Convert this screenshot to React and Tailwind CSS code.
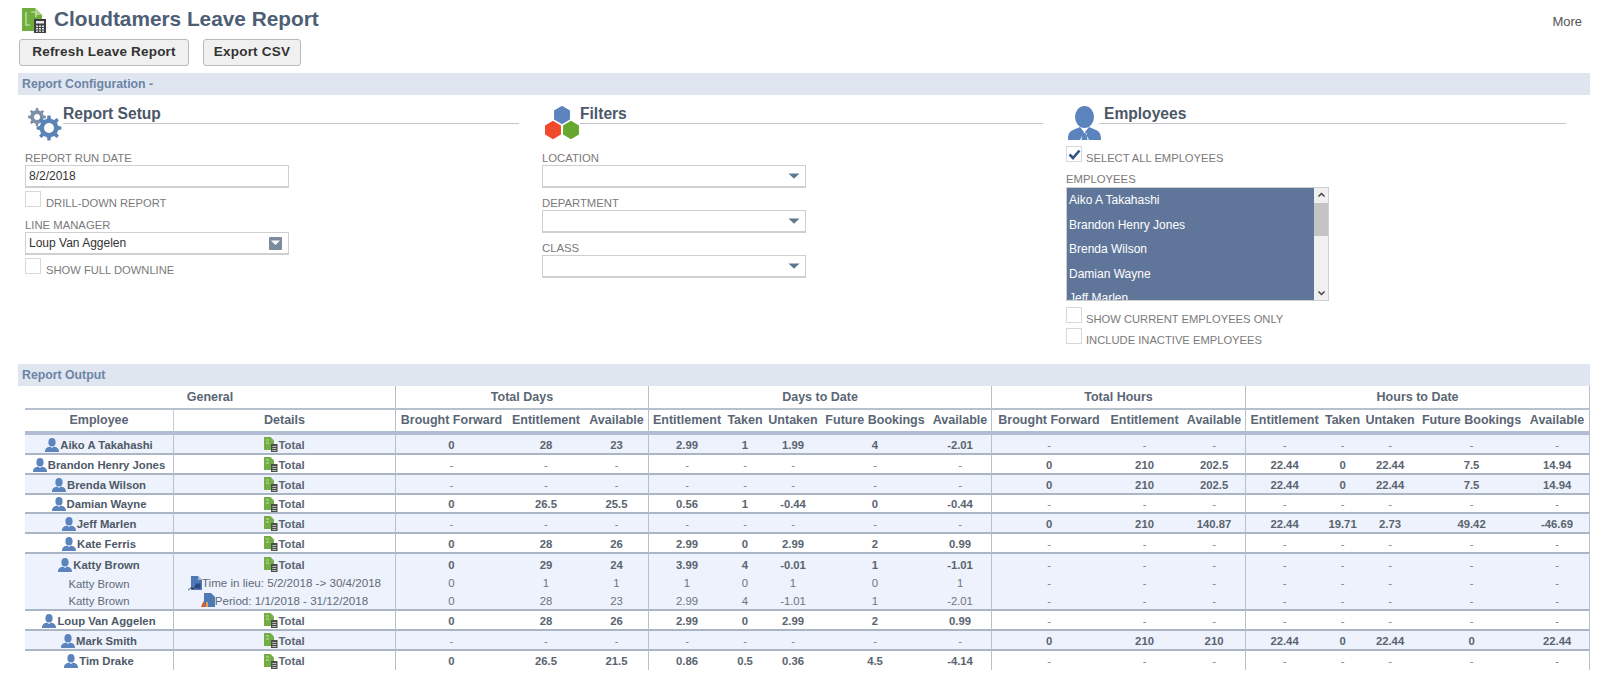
import React from "react";

const GEAR = (cx, cy, rO, rI, n) => {
  let d = "";
  const step = (Math.PI * 2) / n;
  for (let i = 0; i < n; i++) {
    const a = i * step;
    const pts = [
      [a - step * 0.26, rI],
      [a - step * 0.16, rO],
      [a + step * 0.16, rO],
      [a + step * 0.26, rI],
    ];
    pts.forEach(([t, r], j) => {
      d += `${i === 0 && j === 0 ? "M" : "L"}${(cx + r * Math.cos(t)).toFixed(2)} ${(cy + r * Math.sin(t)).toFixed(2)} `;
    });
  }
  return d + "Z";
};

const hex = (cx, cy, r) => {
  let d = "";
  for (let i = 0; i < 6; i++) {
    const t = Math.PI / 6 + (i * Math.PI) / 3;
    d += `${i ? "L" : "M"}${(cx + r * Math.cos(t)).toFixed(2)} ${(cy + r * Math.sin(t)).toFixed(2)} `;
  }
  return d + "Z";
};

function TitleIcon() {
  return (
    <svg width="25" height="26" viewBox="0 0 25 26" className="shrink-0">
      <path d="M0 1h13l7 7v16H0z" fill="#6fae3c" />
      <path d="M13 1l7 7h-7z" fill="#a5d07c" />
      <path d="M4 5v13h4M9 5h5v5" fill="none" stroke="#cfe6b4" strokeWidth="1.2" />
      <rect x="12" y="12" width="12" height="14" fill="#3f3f3f" />
      <rect x="14" y="14" width="8" height="2.5" fill="#e8e8e8" />
      <path d="M14 18.5h2v1.6h-2zM17 18.5h2v1.6h-2zM20 18.5h2v1.6h-2zM14 21h2v1.6h-2zM17 21h2v1.6h-2zM20 21h2v1.6h-2zM14 23.4h2v1.4h-2zM17 23.4h2v1.4h-2zM20 23.4h2v1.4h-2z" fill="#e8e8e8" />
    </svg>
  );
}

function GearsIcon() {
  return (
    <svg width="35" height="34" viewBox="0 0 35 34" className="shrink-0">
      <path d={GEAR(10, 10, 9, 6.8, 8)} fill="#7d90a8" />
      <circle cx="10" cy="10" r="3" fill="#fff" />
      <path d={GEAR(22, 21, 12.5, 9.5, 8)} fill="#5b83b8" />
      <circle cx="22" cy="21" r="5" fill="#fff" />
    </svg>
  );
}

function HexIcon() {
  return (
    <svg width="36" height="34" viewBox="0 0 36 34" className="shrink-0">
      <path d={hex(18, 9, 9.2)} fill="#5b83bd" />
      <path d={hex(9, 24, 9.2)} fill="#f0492b" />
      <path d={hex(27, 24, 9.2)} fill="#66a82e" />
    </svg>
  );
}

function BigPerson() {
  return (
    <svg width="35" height="34" viewBox="0 0 35 34" className="shrink-0">
      <ellipse cx="17.5" cy="11" rx="9.5" ry="11" fill="#5b83bd" />
      <path d="M1 34c0-6 1-8 5-10l7-3 4 5-4 8zM34 34c0-6-1-8-5-10l-7-3-4 5 4 8zM15.5 27h4l1 7h-6z" fill="#5b83bd" />
    </svg>
  );
}

function SmallPerson() {
  return (
    <svg width="14" height="14" viewBox="0 0 14 14" className="shrink-0">
      <ellipse cx="7" cy="4.3" rx="3.6" ry="4.3" fill="#5b83bd" />
      <path d="M0 14c0-3 1-4.500 5-5.500L7 10l2-1.500c4 1 5 2.500 5 5.500z" fill="#5b83bd" />
    </svg>
  );
}

function DocIcon() {
  return (
    <svg width="14" height="15" viewBox="0 0 14 15" className="shrink-0">
      <path d="M0 0h6.500L10 3.500V13H0z" fill="#72ad45" />
      <path d="M2 3h3M2 6h3" stroke="#c6e0a8" strokeWidth="1" />
      <rect x="7" y="7" width="6.500" height="8" fill="#4a4f4a" />
      <path d="M8.300 9.500h4M8.300 11.500h4M8.300 13.500h4" stroke="#d6d6d6" strokeWidth=".8" />
    </svg>
  );
}

function LieuIcon() {
  return (
    <svg width="14" height="15" viewBox="0 0 14 15" className="shrink-0">
      <path d="M3 0h7l4 4v10H3z" fill="#4f79b5" />
      <path d="M10 0l4 4h-4z" fill="#9db9dc" />
      <path d="M7.500 7.500h5v5h-5z" fill="#274b80" />
      <path d="M0 14.500l3-3 2 1.500 3-3" fill="none" stroke="#2f2f2f" strokeWidth="1" />
    </svg>
  );
}

function PeriodIcon() {
  return (
    <svg width="14" height="15" viewBox="0 0 14 15" className="shrink-0">
      <path d="M3 0h7l4 4v10H3z" fill="#4f79b5" />
      <path d="M0 14l2.500-6L5 14z" fill="#e2562c" />
      <path d="M5 14V9h2v5z" fill="#e8a33c" />
    </svg>
  );
}

function Label({ children, className = "" }) {
  return <div className={`text-[11.3px] leading-[13px] text-[#7a7a7a] ${className}`}>{children}</div>;
}

function CheckRow({ label, checked, tight, className = "" }) {
  return (
    <div className={`flex h-[16px] items-start ${className}`}>
      <span className="flex h-[16px] w-[16px] shrink-0 items-center justify-center border border-[#d8d8d8] bg-white">
        {checked ? (
          <svg width="13" height="11" viewBox="0 0 13 11">
            <path d="M1.500 5.500l3.500 3.500 6.500-7.500" fill="none" stroke="#2f5587" strokeWidth="2.600" />
          </svg>
        ) : null}
      </span>
      <span className={tight ? "ml-[4px] mt-[6px] whitespace-nowrap text-[11.2px] leading-[13px] text-[#7a7a7a]" : "ml-[5px] mt-[6px] whitespace-nowrap text-[11.2px] leading-[13px] text-[#7a7a7a]"}>{label}</span>
    </div>
  );
}

function SectionHead({ icon, title, iconClass, lineClass }) {
  return (
    <div className="flex h-[41px] items-start">
      <div className={iconClass}>{icon}</div>
      <div className={`h-[19px] border-b border-[#c3c7cc] ${lineClass}`}>
        <span className="block text-[15.6px] font-bold leading-[17px] text-[#4b5868]">{title}</span>
      </div>
    </div>
  );
}

function Select({ label, className = "" }) {
  return (
    <div className={className}>
      <Label>{label}</Label>
      <div className="flex h-[23px] w-[264px] items-center justify-end border border-[#cfcfcf] border-b-2 bg-white pr-[5px]">
        <svg width="12" height="6" viewBox="0 0 12 6">
          <path d="M0.500 0.500h11L6 5.800z" fill="#5f7890" />
        </svg>
      </div>
    </div>
  );
}

function Bar({ children, className = "" }) {
  return (
    <div className={`ml-[18px] flex w-[1572px] items-center bg-[#dfe6f0] pl-[4px] text-[12.3px] font-bold text-[#6c84a6] ${className}`}>
      {children}
    </div>
  );
}

const D = ["-", "-", "-", "-", "-", "-", "-", "-"];
const H1 = ["0", "210", "202.5", "22.44", "0", "22.44", "7.5", "14.94"];
const KATE = ["0", "28", "26", "2.99", "0", "2.99", "2", "0.99"];

const ROWS = [
  { n: "Aiko A Takahashi", v: [...["0", "28", "23", "2.99", "1", "1.99", "4", "-2.01"], ...D], alt: true, h: "h-[20px]" },
  { n: "Brandon Henry Jones", v: [...D, ...H1], h: "h-[20px]" },
  { n: "Brenda Wilson", v: [...D, ...H1], alt: true, h: "h-[20px]" },
  { n: "Damian Wayne", v: [...["0", "26.5", "25.5", "0.56", "1", "-0.44", "0", "-0.44"], ...D], h: "h-[19px]" },
  { n: "Jeff Marlen", v: [...D, ...["0", "210", "140.87", "22.44", "19.71", "2.73", "49.42", "-46.69"]], alt: true, h: "h-[20px]" },
  { n: "Kate Ferris", v: [...KATE, ...D], h: "h-[20px]" },
  { n: "Katty Brown", v: [...["0", "29", "24", "3.99", "4", "-0.01", "1", "-1.01"], ...D], alt: true, noLine: true, h: "h-[20px]" },
  { n: "Katty Brown", sub: "lieu", d: "Time in lieu: 5/2/2018 -> 30/4/2018", v: [...["0", "1", "1", "1", "0", "1", "0", "1"], ...D], alt: true, noLine: true, h: "h-[18px]" },
  { n: "Katty Brown", sub: "period", d: "Period: 1/1/2018 - 31/12/2018", v: [...["0", "28", "23", "2.99", "4", "-1.01", "1", "-2.01"], ...D], alt: true, h: "h-[19px]" },
  { n: "Loup Van Aggelen", v: [...KATE, ...D], h: "h-[20px]" },
  { n: "Mark Smith", v: [...D, ...["0", "210", "210", "22.44", "0", "22.44", "0", "22.44"]], alt: true, h: "h-[20px]" },
  { n: "Tim Drake", v: [...["0", "26.5", "21.5", "0.86", "0.5", "0.36", "4.5", "-4.14"], ...D], h: "h-[19px]", last: true },
];

const HEADS = ["Brought Forward", "Entitlement", "Available", "Entitlement", "Taken", "Untaken", "Future Bookings", "Available", "Brought Forward", "Entitlement", "Available", "Entitlement", "Taken", "Untaken", "Future Bookings", "Available"];
const ENDS = [2, 7, 10, 15];
const COLS = ["w-[111px]", "w-[78px]", "w-[64px]", "w-[76px]", "w-[40px]", "w-[56px]", "w-[108px]", "w-[63px]", "w-[114px]", "w-[77px]", "w-[63px]", "w-[77px]", "w-[39px]", "w-[56px]", "w-[107px]", "w-[65px]"];
const GROUP_TH = "h-[24px] border-b-2 border-r border-[#b7c1cd] p-0 text-center text-[12.5px] font-bold text-[#5b6675]";

export default function App() {
  return (
    <div className="h-[685px] w-[1600px] overflow-hidden bg-white font-['Liberation_Sans',Arial,sans-serif]">
      <header className="flex h-[39px] items-start justify-between pl-[22px] pr-[18px] pt-[7px]">
        <div className="flex items-start">
          <TitleIcon />
          <h1 className="ml-[7px] text-[20.8px] font-bold leading-[24px] text-[#4d5e75]">Cloudtamers Leave Report</h1>
        </div>
        <div className="mt-[7px] text-[13px] leading-[15px] text-[#555]">More</div>
      </header>

      <div className="ml-[19px] flex h-[27px] gap-[14px]">
        <button className="h-[27px] w-[170px] rounded-[3px] border border-[#b9b9b9] bg-[#f0f0f0] text-[13.5px] font-bold tracking-[.2px] text-[#333]">Refresh Leave Report</button>
        <button className="h-[27px] w-[98px] rounded-[3px] border border-[#b9b9b9] bg-[#f0f0f0] text-[13.5px] font-bold tracking-[.2px] text-[#333]">Export CSV</button>
      </div>

      <Bar className="mt-[7px] h-[22px]">Report Configuration -</Bar>

      <section className="grid h-[269px] grid-cols-[517px_524px_500px] pl-[25px] pt-[10px]">
        <div>
          <SectionHead icon={<GearsIcon />} title="Report Setup" iconClass="ml-[2px] mt-[2px] w-[36px]" lineClass="w-[456px]" />
          <Label className="mt-[6px]">REPORT RUN DATE</Label>
          <div className="flex h-[23px] w-[264px] items-center border border-[#cfcfcf] border-b-2 pl-[3px] text-[12px] text-[#333]">8/2/2018</div>
          <CheckRow label="DRILL-DOWN REPORT" className="mt-[3px]" />
          <Label className="mt-[12px]">LINE MANAGER</Label>
          <div className="flex h-[23px] w-[264px] items-center justify-between border border-[#cfcfcf] border-b-2 pl-[3px] pr-[6px] text-[12px] text-[#333]">
            Loup Van Aggelen
            <svg width="13" height="13" viewBox="0 0 13 13">
              <rect width="13" height="13" rx="1" fill="#7c8c9e" />
              <path d="M2 3.500h9L6.500 8z" fill="#fff" />
            </svg>
          </div>
          <CheckRow label="SHOW FULL DOWNLINE" className="mt-[3px]" />
        </div>

        <div>
          <SectionHead icon={<HexIcon />} title="Filters" iconClass="ml-[2px] mt-[1px] w-[36px]" lineClass="w-[463px]" />
          <Select label="LOCATION" className="mt-[6px]" />
          <Select label="DEPARTMENT" className="mt-[9px]" />
          <Select label="CLASS" className="mt-[9px]" />
        </div>

        <div>
          <SectionHead icon={<BigPerson />} title="Employees" iconClass="ml-[1px] mt-[1px] w-[32px] [&>svg]:overflow-visible" lineClass="w-[468px] pl-[5px]" />
          <CheckRow label="SELECT ALL EMPLOYEES" checked tight />
          <Label className="mt-[11px]">EMPLOYEES</Label>
          <div className="mt-[1px] flex h-[114px] w-[263px] overflow-hidden border border-[#cfcfcf] bg-[#f0f0f0]">
            <ul className="w-[247px] overflow-hidden bg-[#5f769a] text-[12px] text-white">
              {["Aiko A Takahashi", "Brandon Henry Jones", "Brenda Wilson", "Damian Wayne", "Jeff Marlen"].map((n) => (
                <li key={n} className="flex h-[24.5px] items-center pl-[2px]">{n}</li>
              ))}
            </ul>
            <div className="flex flex-1 flex-col items-center">
              <svg width="9" height="15" viewBox="0 0 9 15"><path d="M1.500 8.500L4.500 5.500l3 3" fill="none" stroke="#444" strokeWidth="1.500" /></svg>
              <div className="h-[33px] w-full bg-[#c4c4c4]" />
              <div className="flex-1" />
              <svg width="9" height="15" viewBox="0 0 9 15"><path d="M1.500 6.500L4.500 9.500l3-3" fill="none" stroke="#444" strokeWidth="1.500" /></svg>
            </div>
          </div>
          <CheckRow label="SHOW CURRENT EMPLOYEES ONLY" tight className="mt-[6px]" />
          <CheckRow label="INCLUDE INACTIVE EMPLOYEES" tight className="mt-[5px]" />
        </div>
      </section>

      <Bar className="h-[22px]">Report Output</Bar>

      <table className="ml-[25px] w-[1565px] table-fixed border-separate border-spacing-0">
        <colgroup>
          <col className="w-[149px]" />
          <col className="w-[222px]" />
          {COLS.map((c, i) => <col key={i} className={c} />)}
        </colgroup>
        <thead>
          <tr>
            <th colSpan={2} className={GROUP_TH}>General</th>
            <th colSpan={3} className={GROUP_TH}>Total Days</th>
            <th colSpan={5} className={GROUP_TH}>Days to Date</th>
            <th colSpan={3} className={GROUP_TH}>Total Hours</th>
            <th colSpan={5} className={GROUP_TH}>Hours to Date</th>
          </tr>
          <tr>
            <th className="h-[25px] border-b-4 border-r border-b-[#b0bdd2] border-r-[#c3ccd8] p-0 text-center text-[12.5px] font-bold text-[#5b6675]">Employee</th>
            <th className="h-[25px] border-b-4 border-r border-b-[#b0bdd2] border-r-[#b7c1cd] p-0 text-center text-[12.5px] font-bold text-[#5b6675]">Details</th>
            {HEADS.map((h, i) => (
              <th key={i} className={ENDS.includes(i)
                ? "h-[25px] whitespace-nowrap border-b-4 border-r border-b-[#b0bdd2] border-r-[#b7c1cd] p-0 text-center text-[12.5px] font-bold text-[#5b6675]"
                : "h-[25px] whitespace-nowrap border-b-4 border-b-[#b0bdd2] p-0 text-center text-[12.5px] font-bold text-[#5b6675]"}>{h}</th>
            ))}
          </tr>
        </thead>
        <tbody>
          {ROWS.map((r, i) => {
            const base = `${r.h} px-0 pb-0 ${r.sub ? "pt-0" : "pt-[1px]"} text-center leading-[14px] ${r.alt ? "bg-[#edf2fc]" : "bg-white"} ${r.noLine || r.last ? "" : "border-b-2 border-b-[#aab6c6]"}`;
            return (
              <tr key={i}>
                <td className={`${base} border-r border-r-[#b7c1cd]`}>
                  {r.sub ? (
                    <span className="text-[11.3px] text-[#5f6b7a]">{r.n}</span>
                  ) : (
                    <div className="flex h-[14px] items-center justify-center gap-[1px] text-[11.3px] font-bold text-[#4d5968]">
                      <SmallPerson />
                      {r.n}
                    </div>
                  )}
                </td>
                <td className={`${base} border-r border-r-[#b7c1cd]`}>
                  <div className={r.sub ? "flex h-[14px] items-center justify-center text-[11.6px] text-[#5f6b7a]" : "flex h-[14px] items-center justify-center text-[11.3px] font-bold text-[#5b6675]"}>
                    {r.sub === "lieu" ? <LieuIcon /> : r.sub === "period" ? <PeriodIcon /> : <DocIcon />}
                    {r.sub ? r.d : "Total"}
                  </div>
                </td>
                {r.v.map((v, j) => (
                  <td key={j} className={`${base} ${ENDS.includes(j) ? "border-r border-r-[#b7c1cd]" : ""} text-[11.3px] ${v === "-" ? "text-[#7a8490]" : r.sub ? "text-[#6b7480]" : "font-bold text-[#5a6470]"}`}>{v}</td>
                ))}
              </tr>
            );
          })}
        </tbody>
      </table>
    </div>
  );
}
